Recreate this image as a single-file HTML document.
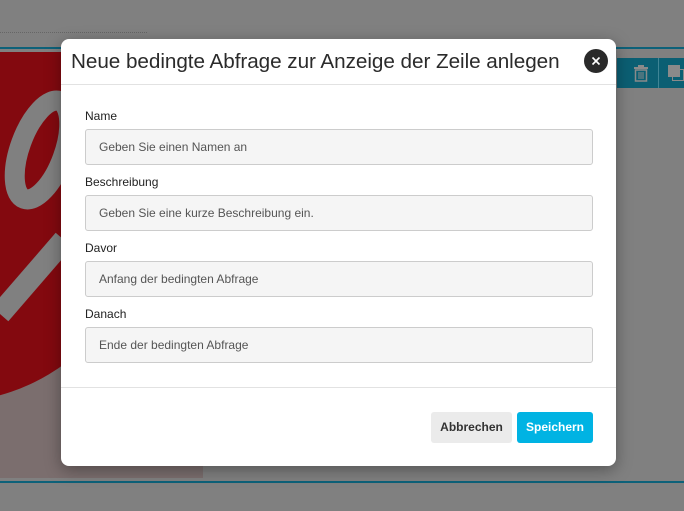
<!DOCTYPE html>
<html><head><meta charset="utf-8"><style>
*{margin:0;padding:0;box-sizing:border-box}
body{width:684px;height:511px;background:#808080;position:relative;overflow:hidden;font-family:"Liberation Sans",sans-serif}
.abs{position:absolute}
.modal{left:61px;top:39px;width:555px;height:427px;background:#fff;border-radius:8px;box-shadow:0 4px 16px rgba(0,0,0,.35)}
.title{left:10px;top:10px;font-size:20.7px;letter-spacing:-0.05px;color:#2b2b2b;white-space:nowrap}
.close{left:523px;top:10px;width:24px;height:24px;border-radius:50%;background:#2a2a2a}
.hr{left:0;width:555px;height:1px;background:#e2e2e2}
.lbl{left:24px;font-size:12px;color:#222}
.inp{left:24px;width:508px;height:36px;background:#f5f5f5;border:1px solid #ccc;border-radius:3px;font-size:12px;color:#555;padding-left:13px;line-height:34px}
.btn{top:373px;height:31px;border-radius:3px;font-size:12px;font-weight:bold;text-align:center;line-height:31px}
</style></head><body>
<div class="abs" style="left:0;top:32px;width:147px;border-top:1px dotted #666"></div>
<div class="abs" style="left:0;top:47px;width:684px;height:2px;background:#0d6179"></div>
<div class="abs" style="left:0;top:52px;width:203px;height:426px;background:#7b6e6e;overflow:hidden">
 <div class="abs" style="left:-260px;top:-120px;width:420px;height:470px;border-radius:50%;background:#83090f"></div>
 <svg class="abs" style="left:0;top:0" width="203" height="426"><ellipse cx="42" cy="98" rx="22" ry="52" transform="rotate(20 42 98)" fill="none" stroke="#808080" stroke-width="20"/><path d="M64 188 L0 262" stroke="#808080" stroke-width="22"/></svg>
</div>
<div class="abs" style="left:0;top:481px;width:684px;height:2px;background:#0d6179"></div>
<div class="abs" style="left:617px;top:58px;width:67px;height:30px;background:#0b5f73"></div>
<div class="abs" style="left:658px;top:58px;width:1px;height:30px;background:#3f8596"></div>
<svg class="abs" style="left:632px;top:64px" width="18" height="18"><rect x="2" y="3" width="14" height="2" fill="#8a8a8a"/><rect x="6" y="1" width="6" height="2" fill="#8a8a8a"/><rect x="3.5" y="6" width="11" height="11" fill="none" stroke="#8a8a8a" stroke-width="1.5"/><path d="M7 8v7M9 8v7M11 8v7" stroke="#8a8a8a"/></svg>
<div class="abs" style="left:668px;top:65px;width:12px;height:12px;background:#8a8a8a"></div>
<div class="abs" style="left:672px;top:69px;width:12px;height:12px;border:1px solid #8a8a8a"></div>
<div class="abs modal">
 <div class="abs title" style="top:11px">Neue bedingte Abfrage zur Anzeige der Zeile anlegen</div>
 <div class="abs close"><svg width="24" height="24"><path d="M8.5 8.5l7 7M15.5 8.5l-7 7" stroke="#fff" stroke-width="1.6"/></svg></div>
 <div class="abs hr" style="top:45px"></div>
 <div class="abs lbl" style="top:70px">Name</div>
 <div class="abs inp" style="top:90px">Geben Sie einen Namen an</div>
 <div class="abs lbl" style="top:136px">Beschreibung</div>
 <div class="abs inp" style="top:156px">Geben Sie eine kurze Beschreibung ein.</div>
 <div class="abs lbl" style="top:202px">Davor</div>
 <div class="abs inp" style="top:222px">Anfang der bedingten Abfrage</div>
 <div class="abs lbl" style="top:268px">Danach</div>
 <div class="abs inp" style="top:288px">Ende der bedingten Abfrage</div>
 <div class="abs hr" style="top:348px"></div>
 <div class="abs btn" style="left:370px;width:81px;background:#ebebeb;color:#333">Abbrechen</div>
 <div class="abs btn" style="left:456px;width:76px;background:#00b3e3;color:#fff">Speichern</div>
</div>
</body></html>
